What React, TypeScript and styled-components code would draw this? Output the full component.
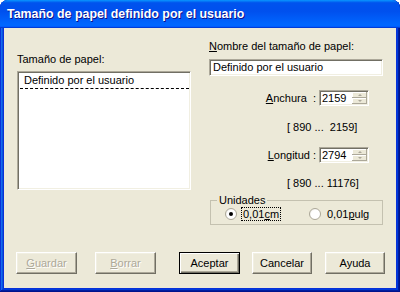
import React from "react";
import styled, { createGlobalStyle } from "styled-components";

const GlobalStyle = createGlobalStyle`
  html, body {
    margin: 0;
    padding: 0;
    background: #fff;
  }
  body {
    font-family: "Liberation Sans", Arial, sans-serif;
    font-size: 11px;
    color: #000;
  }
`;

const Window = styled.div`
  width: 400px;
  height: 292px;
  box-sizing: border-box;
  display: flex;
  flex-direction: column;
  border-radius: 8px 8px 0 0;
  overflow: hidden;
  background: #0831d9;
  box-shadow: inset -1px -1px #00138c, inset 1px 1px #0831d9,
    inset -2px -2px #001ea0, inset 2px 2px #166aee, inset -3px -3px #003bda,
    inset 3px 3px #0855dd;
`;

const TitleBar = styled.div`
  height: 28px;
  flex-shrink: 0;
  display: flex;
  align-items: center;
  padding: 0 0 1px 7px;
  box-sizing: border-box;
  background: linear-gradient(
    180deg,
    #0997ff 0%,
    #0053ee 10%,
    #0050ee 40%,
    #0066ff 86%,
    #0066ff 92%,
    #005bff 95%,
    #003dd7 97%,
    #003dd7 100%
  );
  color: #fff;
  font-family: "Liberation Sans", Arial, sans-serif;
  font-weight: bold;
  font-size: 12.4px;
  text-shadow: 1px 1px #0f1089;
`;

const Body = styled.div`
  flex: 1;
  margin: 0 4px 4px 4px;
  background: #ece9d8;
  display: flex;
  flex-direction: column;
`;

const Columns = styled.div`
  display: grid;
  grid-template-columns: 174px 174px;
  column-gap: 18px;
  padding: 0 13px;
`;

const Column = styled.div<{ $top: number }>`
  display: flex;
  flex-direction: column;
  padding-top: ${(p) => p.$top}px;
`;

const Label = styled.div`
  line-height: 13px;
  height: 13px;
  white-space: pre;
`;

const Key = styled.span`
  text-decoration: underline;
`;

const Sunken = styled.div`
  box-sizing: border-box;
  background: #fff;
  border: 1px solid;
  border-color: #aca899 #fff #fff #aca899;
  box-shadow: inset 1px 1px #716f64, inset -1px -1px #f1efe2;
`;

const ListBox = styled(Sunken)`
  margin-top: 5px;
  height: 119px;
  padding: 2px 1px 0 2px;
`;

const ListItem = styled.div`
  height: 14px;
  line-height: 13px;
  padding-left: 4px;
  border-bottom: 1px dashed #000;
`;

const TextBox = styled(Sunken)`
  margin-top: 6px;
  height: 17px;
  line-height: 14px;
  padding-left: 3px;
`;

const FieldRow = styled.div<{ $gap: number }>`
  display: flex;
  align-items: center;
  justify-content: flex-end;
  padding-right: 14px;
  margin-top: ${(p) => p.$gap}px;
  gap: 3px;
`;

const SpinBox = styled(Sunken)`
  width: 50px;
  height: 16px;
  display: flex;
  align-items: stretch;
  padding: 2px;
`;

const SpinValue = styled.div`
  flex: 1;
  line-height: 11px;
`;

const SpinButtons = styled.div`
  width: 15px;
  display: flex;
  flex-direction: column;
  margin: -1px -1px -1px 0;
`;

const SpinButton = styled.div<{ $down?: boolean }>`
  flex: 1;
  background: #ece9d8;
  box-shadow: inset -1px -1px #aca899, inset 1px 1px #fff;
  display: flex;
  align-items: center;
  justify-content: center;

  &::after {
    content: "";
    width: 0;
    height: 0;
    border-left: 2px solid transparent;
    border-right: 2px solid transparent;
    ${(p) =>
      p.$down
        ? "border-top: 2px solid #aca899;"
        : "border-bottom: 2px solid #aca899;"}
  }
`;

const Range = styled.div<{ $gap: number }>`
  margin-top: ${(p) => p.$gap}px;
  padding-left: 78px;
  line-height: 13px;
  white-space: pre;
`;

const Group = styled.fieldset`
  margin: 4px 0 0 1px;
  padding: 0 0 4px 0;
  border: 1px solid #c4c1b0;
  min-width: 0;
  display: flex;
  align-items: center;
`;

const Legend = styled.legend`
  margin-left: 6px;
  padding: 0 2px;
  line-height: 13px;
`;

const RadioOption = styled.label<{ $width: number; $indent?: number }>`
  display: flex;
  align-items: center;
  width: ${(p) => p.$width}px;
  margin-left: ${(p) => p.$indent ?? 0}px;
  height: 13px;
`;

const RadioCircle = styled.span<{ $checked?: boolean }>`
  width: 12px;
  height: 12px;
  box-sizing: border-box;
  border-radius: 50%;
  border: 1px solid #aca899;
  background: radial-gradient(circle at 60% 60%, #fff 55%, #e2e0d6 100%);
  display: flex;
  align-items: center;
  justify-content: center;
  margin-right: 5px;

  &::after {
    content: "";
    width: 4px;
    height: 4px;
    border-radius: 50%;
    background: ${(p) => (p.$checked ? "#000" : "transparent")};
  }
`;

const RadioText = styled.span<{ $focused?: boolean }>`
  line-height: 12px;
  padding: 0 1px;
  outline: ${(p) => (p.$focused ? "1px dotted #000" : "none")};
`;

const ButtonRow = styled.div`
  margin-top: auto;
  display: flex;
  padding: 0 0 14px 12px;
`;

const Button = styled.div<{
  $gap?: number;
  $width?: number;
  $default?: boolean;
  $disabled?: boolean;
}>`
  box-sizing: border-box;
  width: ${(p) => p.$width ?? 61}px;
  height: 22px;
  margin-left: ${(p) => p.$gap ?? 0}px;
  display: flex;
  align-items: center;
  justify-content: center;
  background: #ece9d8;
  border: 1px solid;
  border-color: ${(p) =>
    p.$default ? "#000" : "#fff #716f64 #716f64 #fff"};
  box-shadow: ${(p) =>
    p.$default
      ? "inset 1px 1px #fff, inset -1px -1px #716f64, inset -2px -2px #aca899"
      : "inset -1px -1px #aca899, inset 1px 1px #f1efe2"};
  color: ${(p) => (p.$disabled ? "#aca899" : "#000")};
  text-shadow: ${(p) => (p.$disabled ? "1px 1px #fff" : "none")};
`;

export default function App() {
  return (
    <>
      <GlobalStyle />
      <Window>
        <TitleBar>Tamaño de papel definido por el usuario</TitleBar>
        <Body>
          <Columns>
            <Column $top={25}>
              <Label>Tamaño de papel:</Label>
              <ListBox>
                <ListItem>Definido por el usuario</ListItem>
              </ListBox>
            </Column>
            <Column $top={12}>
              <Label>
                <Key>N</Key>ombre del tamaño de papel:
              </Label>
              <TextBox>Definido por el usuario</TextBox>
              <FieldRow $gap={14}>
                <Label>
                  <Key>A</Key>nchura{"  "}:
                </Label>
                <SpinBox>
                  <SpinValue>2159</SpinValue>
                  <SpinButtons>
                    <SpinButton />
                    <SpinButton $down />
                  </SpinButtons>
                </SpinBox>
              </FieldRow>
              <Range $gap={15}>[ 890 ...  2159]</Range>
              <FieldRow $gap={13}>
                <Label>
                  <Key>L</Key>ongitud :
                </Label>
                <SpinBox>
                  <SpinValue>2794</SpinValue>
                  <SpinButtons>
                    <SpinButton />
                    <SpinButton $down />
                  </SpinButtons>
                </SpinBox>
              </FieldRow>
              <Range $gap={14}>[ 890 ... 11176]</Range>
              <Group>
                <Legend>Unidades</Legend>
                <RadioOption $width={84} $indent={14}>
                  <RadioCircle $checked />
                  <RadioText $focused>
                    0,01<Key>c</Key>m
                  </RadioText>
                </RadioOption>
                <RadioOption $width={70}>
                  <RadioCircle />
                  <RadioText>
                    0,01<Key>p</Key>ulg
                  </RadioText>
                </RadioOption>
              </Group>
            </Column>
          </Columns>
          <ButtonRow>
            <Button $disabled>
              <span>
                <Key>G</Key>uardar
              </span>
            </Button>
            <Button $disabled $gap={18}>
              <span>
                <Key>B</Key>orrar
              </span>
            </Button>
            <Button $default $gap={23}>
              Aceptar
            </Button>
            <Button $gap={12} $width={60}>
              Cancelar
            </Button>
            <Button $gap={13} $width={60}>
              Ayuda
            </Button>
          </ButtonRow>
        </Body>
      </Window>
    </>
  );
}
